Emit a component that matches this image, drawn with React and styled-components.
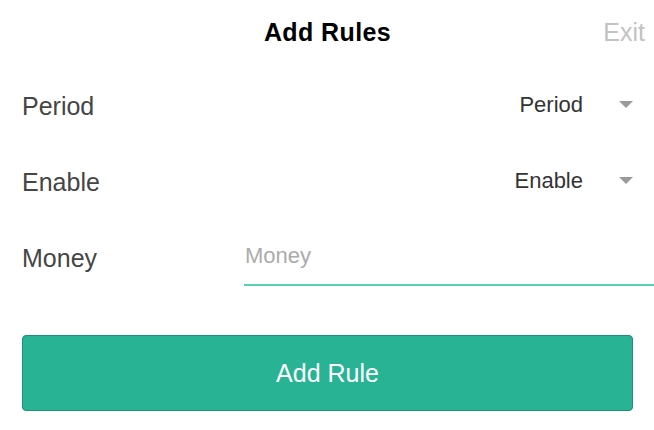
import React, {useState} from "react";
import styled, {createGlobalStyle} from "styled-components";

const GlobalStyle = createGlobalStyle`
  body {
    margin: 0;
    background: #fff;
    font-family: "Liberation Sans", Arial, sans-serif;
  }
`;

function Caret() {
  return (
    <svg width="14" height="8" viewBox="0 0 14 8">
      <path d="M0 0 L14 0 L7 7 Z" fill="#9a9a9a" />
    </svg>
  );
}

function Select({value}) {
  return (
    <SelectBox>
      <span className="value">{value}</span>
      <Caret />
    </SelectBox>
  );
}

export default function App() {
  const [money, setMoney] = useState("");

  return (
    <Page>
      <GlobalStyle />
      <Header>
        <span />
        <Title>Add Rules</Title>
        <ExitLink>Exit</ExitLink>
      </Header>

      <Row>
        <Label>Period</Label>
        <Select value="Period" />
      </Row>
      <Row>
        <Label>Enable</Label>
        <Select value="Enable" />
      </Row>
      <Row>
        <Label>Money</Label>
        <MoneyInput
          placeholder="Money"
          value={money}
          onChange={(e) => setMoney(e.target.value)}
        />
      </Row>

      <SubmitButton>Add Rule</SubmitButton>
    </Page>
  );
}

const Page = styled.main`
  width: 654px;
  height: 430px;
  padding: 0 21px 0 22px;
  box-sizing: border-box;
  display: flex;
  flex-direction: column;
`;

const Header = styled.header`
  height: 64px;
  margin: 0 -21px 3px -22px;
  display: grid;
  grid-template-columns: 1fr auto 1fr;
  align-items: center;
`;

const Title = styled.h1`
  margin: 0;
  padding-left: 1px;
  font-size: 25px;
  font-weight: 700;
  letter-spacing: 0.4px;
  color: #000;
`;

const ExitLink = styled.span`
  justify-self: end;
  margin-right: 9px;
  font-size: 25px;
  color: #c2c2c2;
  cursor: pointer;
`;

const Row = styled.div`
  height: 76px;
  display: flex;
  align-items: center;
  justify-content: space-between;
`;

const Label = styled.label`
  padding-top: 3px;
  font-size: 25px;
  color: #454545;
`;

const SelectBox = styled.div`
  display: flex;
  align-items: center;
  gap: 36px;
  cursor: pointer;
  .value {
    font-size: 22px;
    color: #333;
  }
`;

const MoneyInput = styled.input`
  width: 410px;
  height: 56px;
  margin: 1px -21px 0 0;
  padding: 0 0 2px 1px;
  box-sizing: border-box;
  border: none;
  border-bottom: 2px solid #5dcfb1;
  outline: none;
  font-family: inherit;
  font-size: 22px;
  color: #333;
  &::placeholder {
    color: #ababab;
  }
`;

const SubmitButton = styled.button`
  margin-top: 40px;
  height: 76px;
  width: 100%;
  border: 1px solid #1f8f75;
  border-radius: 4px;
  background: #28b394;
  color: #fff;
  font-family: inherit;
  font-size: 25px;
  cursor: pointer;
`;
